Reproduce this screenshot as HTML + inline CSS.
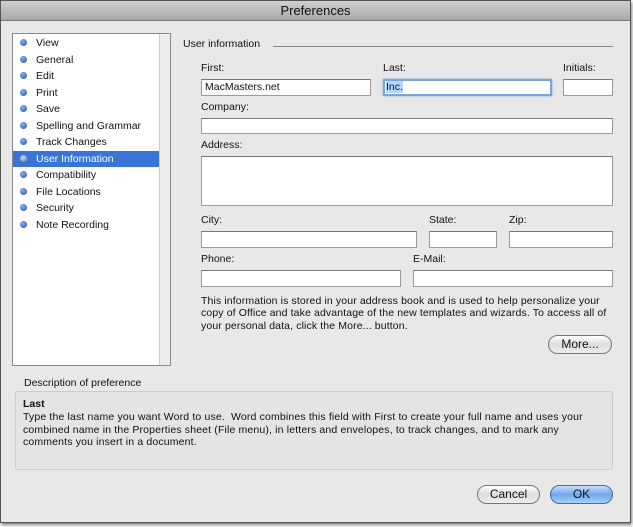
<!DOCTYPE html>
<html><head><style>
*{margin:0;padding:0;box-sizing:border-box}
body{width:633px;height:527px;background:#fff;font-family:"Liberation Sans",sans-serif;font-size:10.5px;color:#111;position:relative;overflow:hidden}
.win{position:absolute;left:0;top:0;width:631px;height:523px;background:#e8e8e8;border:1px solid #555;box-shadow:1px 2px 3px rgba(0,0,0,.5)}
.title{position:absolute;left:0;top:0;width:629px;height:20px;background:linear-gradient(#cfcfcf,#a9a9a9);border-bottom:1px solid #777;text-align:center;font-size:13px;line-height:20px;color:#111}
.a{position:absolute}
.list{position:absolute;left:12px;top:33px;width:159px;height:333px;background:#fff;border:1px solid #8a8a8a}
.sb{position:absolute;right:0;top:0;width:11px;height:100%;background:#ececec;border-left:1px solid #ccc}
.it{position:absolute;left:0;width:146px;height:16.5px;line-height:16px;padding-left:23px;font-size:10.5px}
.it:before{content:"";position:absolute;left:7px;top:4px;width:7px;height:7px;border-radius:50%;background:radial-gradient(circle at 40% 35%,#8ab0e8,#1e4f9f)}
.sel{background:#3875d7;color:#fff}
.sel:before{background:radial-gradient(circle at 40% 35%,#cde,#678)}
.in{position:absolute;background:#fff;border:1px solid #9a9a9a;border-top-color:#777}
.lb{position:absolute;font-size:10.5px}
.btn{position:absolute;height:19px;border:1px solid #777;border-radius:10px;background:linear-gradient(#fff,#ddd 50%,#eee);text-align:center;line-height:17px;font-size:12px}
</style></head><body>
<div class="win">
<div class="title">Preferences</div>
</div>
<div class="list">
<div class="sb"></div>
<div class="it" style="top:1px">View</div>
<div class="it" style="top:17.5px">General</div>
<div class="it" style="top:34px">Edit</div>
<div class="it" style="top:50.5px">Print</div>
<div class="it" style="top:67px">Save</div>
<div class="it" style="top:83.5px">Spelling and Grammar</div>
<div class="it" style="top:100px">Track Changes</div>
<div class="it sel" style="top:116.5px">User Information</div>
<div class="it" style="top:133px">Compatibility</div>
<div class="it" style="top:149.5px">File Locations</div>
<div class="it" style="top:166px">Security</div>
<div class="it" style="top:182.5px">Note Recording</div>
</div>
<div class="lb" style="left:183px;top:38px">User information</div>
<div class="a" style="left:273px;top:46px;width:340px;height:1px;background:#888"></div>
<div class="lb" style="left:201px;top:62px">First:</div>
<div class="lb" style="left:383px;top:62px">Last:</div>
<div class="lb" style="left:563px;top:62px">Initials:</div>
<div class="in" style="left:201px;top:79px;width:170px;height:17px;padding-left:3px;line-height:15px">MacMasters.net</div>
<div class="in" style="left:383px;top:79px;width:169px;height:17px;border:2px solid #7da4d8;box-shadow:0 0 2px #7da4d8;padding-left:1px;line-height:13px"><span style="background:#b5d5ff">Inc.</span></div>
<div class="in" style="left:563px;top:79px;width:50px;height:17px"></div>
<div class="lb" style="left:201px;top:101px">Company:</div>
<div class="in" style="left:201px;top:118px;width:412px;height:16px"></div>
<div class="lb" style="left:201px;top:139px">Address:</div>
<div class="in" style="left:201px;top:156px;width:412px;height:50px"></div>
<div class="lb" style="left:201px;top:214px">City:</div>
<div class="lb" style="left:429px;top:214px">State:</div>
<div class="lb" style="left:509px;top:214px">Zip:</div>
<div class="in" style="left:201px;top:231px;width:216px;height:17px"></div>
<div class="in" style="left:429px;top:231px;width:68px;height:17px"></div>
<div class="in" style="left:509px;top:231px;width:104px;height:17px"></div>
<div class="lb" style="left:201px;top:253px">Phone:</div>
<div class="lb" style="left:413px;top:253px">E-Mail:</div>
<div class="in" style="left:201px;top:270px;width:200px;height:17px"></div>
<div class="in" style="left:413px;top:270px;width:200px;height:17px"></div>
<div class="lb" style="left:201px;top:295px;width:414px;line-height:12.3px;letter-spacing:.12px">This information is stored in your address book and is used to help personalize your copy of Office and take advantage of the new templates and wizards. To access all of your personal data, click the More... button.</div>
<div class="btn" style="left:548px;top:335px;width:64px">More...</div>
<div class="lb" style="left:24px;top:377px">Description of preference</div>
<div class="a" style="left:15px;top:391px;width:598px;height:79px;border:1px solid #ccc;border-radius:3px;background:#e4e4e4"></div>
<div class="lb" style="left:23px;top:398px;font-weight:bold">Last</div>
<div class="lb" style="left:23px;top:411px;width:588px;line-height:12.5px;letter-spacing:.15px">Type the last name you want Word to use.&nbsp; Word combines this field with First to create your full name and uses your<br>combined name in the Properties sheet (File menu), in letters and envelopes, to track changes, and to mark any<br>comments you insert in a document.</div>
<div class="btn" style="left:477px;top:485px;width:63px">Cancel</div>
<div class="btn" style="left:550px;top:485px;width:63px;background:linear-gradient(#c8e0fa,#6fa8ea 50%,#a6d0fa);border-color:#4a6a9a">OK</div>
</body></html>
